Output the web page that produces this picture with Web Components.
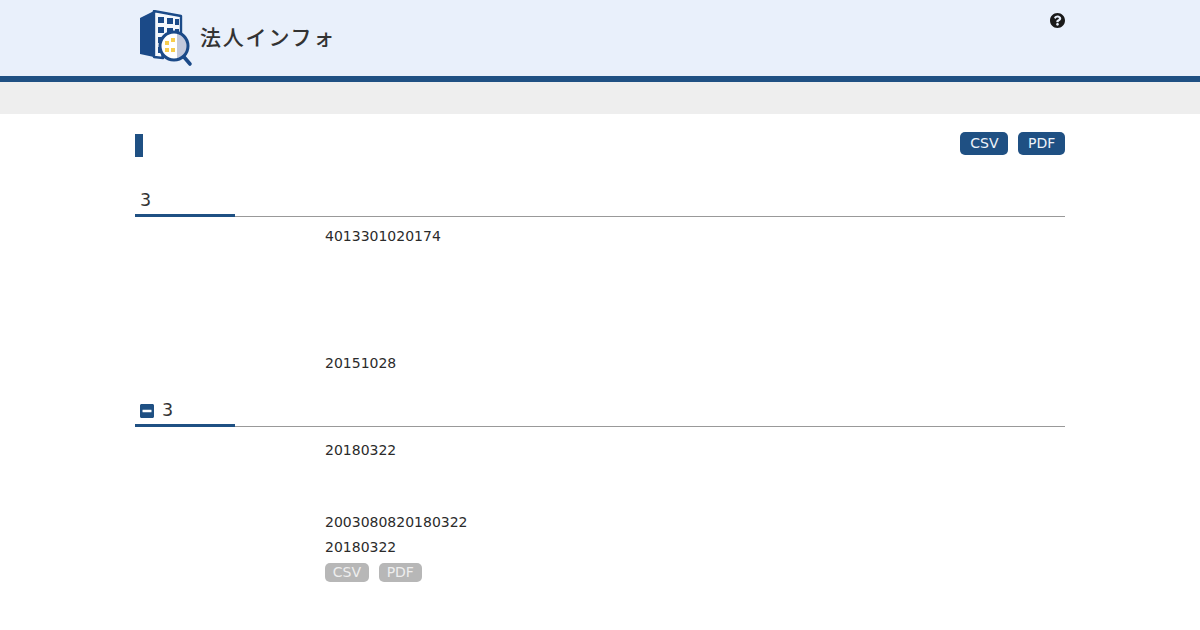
<!DOCTYPE html>
<html lang="ja">
<head>
<meta charset="utf-8">
<title>法人インフォ</title>
<style>
  html, body { margin: 0; padding: 0; background: #fff; }
  body { font-family: "DejaVu Sans", "Noto Sans CJK JP", sans-serif; color: #212529; }
</style>
</head>
<body>
<site-header></site-header>
<sub-bar></sub-bar>
<page-body>
  <title-row>
    <pill-button>CSV</pill-button>
    <pill-button>PDF</pill-button>
  </title-row>
  <section-block count="3">
    <data-row>4013301020174</data-row>
    <data-row empty="102"></data-row>
    <data-row>20151028</data-row>
  </section-block>
  <section-block count="3" toggle>
    <data-row>20180322</data-row>
    <data-row empty="47"></data-row>
    <data-row>2003080820180322</data-row>
    <data-row>20180322</data-row>
    <data-row>
      <pill-button small disabled>CSV</pill-button>
      <pill-button small disabled>PDF</pill-button>
    </data-row>
  </section-block>
</page-body>

<script>
class SiteHeader extends HTMLElement {
  constructor() {
    super();
    this.attachShadow({mode: "open"}).innerHTML = `
    <style>
      :host { display: block; background: #e9f0fb; border-bottom: 6px solid #1f5083; height: 76px; }
      .inner { width: 930px; height: 100%; margin: 0 auto; display: flex; justify-content: space-between; position: relative; }
      .logo { display: flex; align-items: center; margin-left: 4px; }
      .logo svg { display: block; margin-top: 1px; }
      .name { font-family: "Noto Sans CJK JP", sans-serif; font-size: 21px; font-weight: 500; letter-spacing: 1.8px; color: #333; margin-left: 7px; margin-top: -5px; white-space: nowrap; }
      .help { display: block; margin-top: 13px; width: 15px; height: 15px; }
    </style>
    <div class="inner">
      <div class="logo">
        <svg width="54" height="58" viewBox="0 0 54 58">
          <path d="M1 8 15 1V47L1 44Z" fill="#1b4a88"/>
          <path d="M15 1 42 6V26H30L22 38 24 48 15 47Z" fill="#f4f7fc" stroke="#1b4a88" stroke-width="2.4" stroke-linejoin="round"/>
          <path d="M13 2 16 1V47L13 46Z" fill="#1b4a88"/>
          <g fill="#1b4a88">
            <rect x="19" y="7" width="6" height="6"/><rect x="28" y="8" width="6" height="6"/><rect x="36" y="9" width="4" height="6"/>
            <rect x="19" y="17" width="6" height="6"/><rect x="28" y="18" width="6" height="5"/><rect x="36" y="19" width="4" height="5"/>
            <rect x="19" y="27" width="5" height="6"/><rect x="19" y="37" width="4" height="6"/>
          </g>
          <circle cx="35" cy="36" r="14" fill="#fff"/>
          <path d="M38 24a12 12 0 0 1 0 24Z" fill="#c3c9dc"/>
          <g fill="#f7cd4e">
            <rect x="26" y="31" width="4" height="4"/><rect x="32" y="28" width="4" height="4"/>
            <rect x="26" y="38" width="4" height="4"/><rect x="32" y="38" width="4" height="4"/>
          </g>
          <circle cx="35" cy="36" r="14" fill="none" stroke="#1b4a88" stroke-width="3"/>
          <path d="M45 47 51 54" stroke="#1b4a88" stroke-width="3.6" stroke-linecap="round"/>
        </svg>
        <span class="name">法人インフォ</span>
      </div>
      <svg class="help" viewBox="8 8 496 496"><path fill="#1a1a1a" d="M504 256c0 136.997-111.043 248-248 248S8 392.997 8 256C8 119.083 119.043 8 256 8s248 111.083 248 248zM262.655 90c-54.497 0-89.255 22.957-116.549 63.758-3.536 5.286-2.353 12.415 2.715 16.258l34.699 26.31c5.205 3.947 12.621 3.008 16.665-2.122 17.864-22.658 30.113-35.797 57.303-35.797 20.429 0 45.698 13.148 45.698 32.958 0 14.976-12.363 22.667-32.534 33.976C247.128 238.528 216 254.941 216 296v4c0 6.627 5.373 12 12 12h56c6.627 0 12-5.373 12-12v-1.333c0-28.462 83.186-29.647 83.186-106.667 0-58.002-60.165-102-116.531-102zM256 338c-25.365 0-46 20.635-46 46 0 25.364 20.635 46 46 46s46-20.636 46-46c0-25.365-20.635-46-46-46z"/></svg>
    </div>`;
  }
}
customElements.define("site-header", SiteHeader);

class SubBar extends HTMLElement {
  constructor() {
    super();
    this.attachShadow({mode: "open"}).innerHTML = `
    <style>
      :host { display: block; height: 32px; background: #eee; }
    </style>`;
  }
}
customElements.define("sub-bar", SubBar);

class PageBody extends HTMLElement {
  constructor() {
    super();
    this.attachShadow({mode: "open"}).innerHTML = `
    <style>
      :host { display: block; width: 930px; margin: 0 auto; padding-top: 18px; }
    </style>
    <slot></slot>`;
  }
}
customElements.define("page-body", PageBody);

class TitleRow extends HTMLElement {
  constructor() {
    super();
    this.attachShadow({mode: "open"}).innerHTML = `
    <style>
      :host { display: flex; justify-content: space-between; align-items: flex-start; height: 25px; }
      .mark { width: 8px; height: 23px; background: #1f5083; margin-top: 2px; }
      .actions { display: flex; gap: 10px; }
    </style>
    <div class="mark"></div>
    <div class="actions"><slot></slot></div>`;
  }
}
customElements.define("title-row", TitleRow);

class PillButton extends HTMLElement {
  constructor() {
    super();
    this.attachShadow({mode: "open"}).innerHTML = `
    <style>
      :host { display: inline-block; background: #1f5083; color: #eef3fa; font-size: 14px; line-height: 23px; height: 23px; padding: 0 9.75px; border-radius: 5px; }
      :host([small]) { line-height: 19px; height: 19px; padding: 0 7.8px; margin-top: 3px; }
      :host([disabled]) { background: #b7b7b7; color: #eee; }
    </style>
    <slot></slot>`;
  }
}
customElements.define("pill-button", PillButton);

class SectionBlock extends HTMLElement {
  constructor() {
    super();
    const minus = this.hasAttribute("toggle") ? `<svg class="toggle" viewBox="0 0 448 512"><path fill="#1f5083" d="M400 32H48C21.5 32 0 53.5 0 80v352c0 26.5 21.5 48 48 48h352c26.5 0 48-21.5 48-48V80c0-26.5-21.5-48-48-48zM92 296c-6.6 0-12-5.4-12-12v-56c0-6.6 5.4-12 12-12h264c6.6 0 12 5.4 12 12v56c0 6.6-5.4 12-12 12H92z"/></svg>` : "";
    this.attachShadow({mode: "open"}).innerHTML = `
    <style>
      :host { display: block; margin-top: 31px; }
      :host([toggle]) { margin-top: 22px; }
      .head { position: relative; display: flex; align-items: center; gap: 8px; height: 25px; padding-left: 5px; padding-bottom: 3px; border-bottom: 1px solid #999; font-size: 17.5px; line-height: 25px; color: #333; }
      .head::after { content: ""; position: absolute; left: 0; bottom: -1px; width: 100px; height: 3px; background: #1f5083; }
      .toggle { width: 14px; height: 16px; display: block; }
      .rows { padding-top: 7px; }
      :host([toggle]) .rows { padding-top: 11px; }
    </style>
    <div class="head">${minus}<span>${this.getAttribute("count")}</span></div>
    <div class="rows"><slot></slot></div>`;
  }
}
customElements.define("section-block", SectionBlock);

class DataRow extends HTMLElement {
  constructor() {
    super();
    const gap = this.getAttribute("empty");
    this.attachShadow({mode: "open"}).innerHTML = `
    <style>
      :host { display: grid; grid-template-columns: 190px 1fr; font-size: 14px; line-height: 25px; min-height: 25px; color: #2b2b2b; ${gap ? `min-height: ${gap}px;` : ""} }
      .value { display: flex; gap: 10px; align-items: flex-start; }
    </style>
    <div></div>
    <div class="value"><slot></slot></div>`;
  }
}
customElements.define("data-row", DataRow);
</script>
</body>
</html>
